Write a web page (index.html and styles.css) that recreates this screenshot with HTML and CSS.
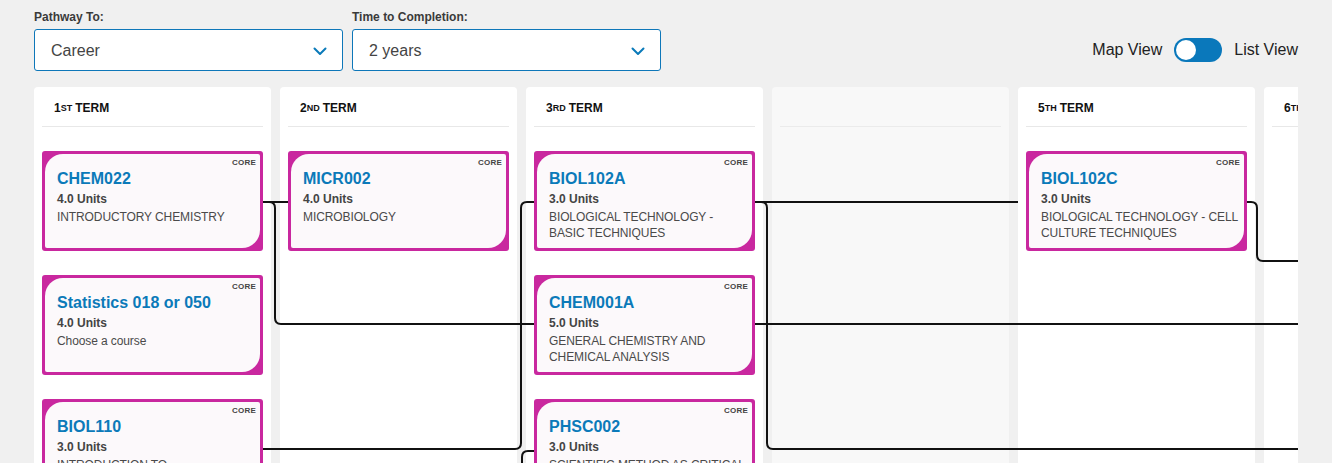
FILE: index.html
```html
<!DOCTYPE html>
<html lang="en">
<head>
<meta charset="utf-8">
<title>Pathway Map</title>
<link rel="stylesheet" href="styles.css">
</head>
<body>
<div class="page">
  <div class="toolbar">
    <div class="filters">
      <div class="field">
        <div class="field-label">Pathway To:</div>
        <div class="select">
          <span class="select-value">Career</span>
          <svg class="chevron" viewBox="0 0 14 9" width="14" height="9"><path d="M1.5 1.5 L7 7 L12.5 1.5"/></svg>
        </div>
      </div>
      <div class="field">
        <div class="field-label">Time to Completion:</div>
        <div class="select">
          <span class="select-value">2 years</span>
          <svg class="chevron" viewBox="0 0 14 9" width="14" height="9"><path d="M1.5 1.5 L7 7 L12.5 1.5"/></svg>
        </div>
      </div>
    </div>
    <div class="view-toggle">
      <span class="view-label">Map View</span>
      <span class="switch"><span class="knob"></span></span>
      <span class="view-label">List View</span>
    </div>
  </div>

  <div class="board">
    <svg class="links" width="1264" height="400" viewBox="0 0 1264 400">
      <path d="M229 115 H254"/>
      <path d="M229 115 H235 Q241 115 241 121 V231 Q241 237 247 237 H1270"/>
      <path d="M229 362 H481 Q487 362 487 356 V121 Q487 115 493 115 H500"/>
      <path d="M488 400 V370 Q488 364 494 364 H500"/>
      <path d="M721 115 H984"/>
      <path d="M721 115 H727 Q733 115 733 121 V356 Q733 362 739 362 H1270"/>
      <path d="M1213 115 H1217 Q1223 115 1223 121 V168 Q1223 174 1229 174 H1270"/>
    </svg>

    <div class="col">
      <div class="col-head">1<sup>ST</sup> TERM</div>
      <div class="cards">
        <div class="card"><div class="card-in">
          <span class="tag">CORE</span>
          <div class="code">CHEM022</div>
          <div class="units">4.0 Units</div>
          <div class="desc">INTRODUCTORY CHEMISTRY</div>
        </div></div>
        <div class="card"><div class="card-in">
          <span class="tag">CORE</span>
          <div class="code">Statistics 018 or 050</div>
          <div class="units">4.0 Units</div>
          <div class="desc">Choose a course</div>
        </div></div>
        <div class="card"><div class="card-in">
          <span class="tag">CORE</span>
          <div class="code">BIOL110</div>
          <div class="units">3.0 Units</div>
          <div class="desc">INTRODUCTION TO BIOTECHNOLOGY</div>
        </div></div>
      </div>
    </div>

    <div class="col">
      <div class="col-head">2<sup>ND</sup> TERM</div>
      <div class="cards">
        <div class="card"><div class="card-in">
          <span class="tag">CORE</span>
          <div class="code">MICR002</div>
          <div class="units">4.0 Units</div>
          <div class="desc">MICROBIOLOGY</div>
        </div></div>
      </div>
    </div>

    <div class="col">
      <div class="col-head">3<sup>RD</sup> TERM</div>
      <div class="cards">
        <div class="card"><div class="card-in">
          <span class="tag">CORE</span>
          <div class="code">BIOL102A</div>
          <div class="units">3.0 Units</div>
          <div class="desc">BIOLOGICAL TECHNOLOGY - BASIC TECHNIQUES</div>
        </div></div>
        <div class="card"><div class="card-in">
          <span class="tag">CORE</span>
          <div class="code">CHEM001A</div>
          <div class="units">5.0 Units</div>
          <div class="desc">GENERAL CHEMISTRY AND CHEMICAL ANALYSIS</div>
        </div></div>
        <div class="card"><div class="card-in">
          <span class="tag">CORE</span>
          <div class="code">PHSC002</div>
          <div class="units">3.0 Units</div>
          <div class="desc">SCIENTIFIC METHOD AS CRITICAL THINKING</div>
        </div></div>
      </div>
    </div>

    <div class="col col-empty">
      <div class="col-head"></div>
    </div>

    <div class="col">
      <div class="col-head">5<sup>TH</sup> TERM</div>
      <div class="cards">
        <div class="card"><div class="card-in">
          <span class="tag">CORE</span>
          <div class="code">BIOL102C</div>
          <div class="units">3.0 Units</div>
          <div class="desc">BIOLOGICAL TECHNOLOGY - CELL CULTURE TECHNIQUES</div>
        </div></div>
      </div>
    </div>

    <div class="col">
      <div class="col-head">6<sup>TH</sup> TERM</div>
    </div>
  </div>
</div>
</body>
</html>
```

FILE: styles.css
```css
html, body {
  margin: 0;
  padding: 0;
  background: #f0f0f0;
  height: 463px;
  overflow: hidden;
}

body {
  font-family: "Liberation Sans", Arial, sans-serif;
  color: #444;
}

.page {
  padding: 10px 34px 0 34px;
}

.toolbar {
  display: flex;
  justify-content: space-between;
  align-items: flex-end;
}

.filters {
  display: flex;
  gap: 9px;
}

.field {
  display: flex;
  flex-direction: column;
  gap: 5px;
}

.field-label {
  font-size: 12px;
  line-height: 14px;
  font-weight: bold;
  color: #3a3a3a;
}

.select {
  width: 309px;
  height: 42px;
  box-sizing: border-box;
  border: 1px solid #0e77b9;
  border-radius: 3px;
  background: #fff;
  display: flex;
  align-items: center;
  justify-content: space-between;
  padding: 2px 15px 0 16px;
}

.select-value {
  font-size: 16px;
  color: #444;
}

.chevron path {
  fill: none;
  stroke: #0a7ab9;
  stroke-width: 2;
  stroke-linecap: round;
  stroke-linejoin: round;
}

.view-toggle {
  height: 42px;
  display: flex;
  align-items: center;
  gap: 12px;
  padding-top: 2px;
}

.view-label {
  font-size: 16px;
  color: #222;
}

.switch {
  width: 48px;
  height: 24px;
  border-radius: 12px;
  background: #0a78bb;
  box-sizing: border-box;
  padding: 2px;
  display: flex;
  align-items: center;
}

.knob {
  width: 20px;
  height: 20px;
  border-radius: 50%;
  background: #fff;
}

.board {
  margin-top: 16px;
  position: relative;
  display: flex;
  gap: 9px;
  overflow: hidden;
  height: 400px;
}

.links {
  position: absolute;
  left: 0;
  top: 0;
  z-index: 1;
  pointer-events: none;
}

.links path {
  fill: none;
  stroke: #111;
  stroke-width: 2;
}

.col {
  flex: none;
  width: 237px;
  box-sizing: border-box;
  background: #fff;
  border-radius: 4px;
  padding: 0 8px;
  height: 400px;
}

.col-empty {
  background: #f8f8f8;
}

.col-head {
  height: 40px;
  box-sizing: border-box;
  border-bottom: 1px solid #e8e8e8;
  padding: 3px 0 0 12px;
  display: flex;
  align-items: center;
  font-size: 12px;
  font-weight: bold;
  color: #111;
  white-space: nowrap;
}

.col-empty .col-head {
  border-bottom-color: #ebebeb;
}

.col-head sup {
  font-size: 9px;
  line-height: 0;
  vertical-align: 5px;
  margin-right: 3px;
}

.cards {
  padding-top: 24px;
  display: flex;
  flex-direction: column;
  gap: 24px;
}

.card {
  position: relative;
  z-index: 2;
  height: 100px;
  box-sizing: border-box;
  padding: 3px;
  background: #c9289f;
  border-radius: 3px;
}

.card-in {
  position: relative;
  height: 100%;
  box-sizing: border-box;
  background: #fcf9fb;
  border-radius: 18px 2px 18px 2px;
  padding: 15px 4px 0 12px;
}

.tag {
  position: absolute;
  top: 4px;
  right: 4px;
  font-size: 8px;
  line-height: 10px;
  font-weight: bold;
  color: #444;
  letter-spacing: 0.2px;
}

.code {
  font-size: 16px;
  line-height: 20px;
  font-weight: bold;
  color: #0b7ab9;
  white-space: nowrap;
}

.units {
  margin-top: 2px;
  font-size: 12px;
  line-height: 16px;
  font-weight: bold;
  color: #444;
}

.desc {
  margin-top: 2px;
  font-size: 12px;
  line-height: 16px;
  color: #4a4a4a;
  letter-spacing: -0.1px;
}
```
